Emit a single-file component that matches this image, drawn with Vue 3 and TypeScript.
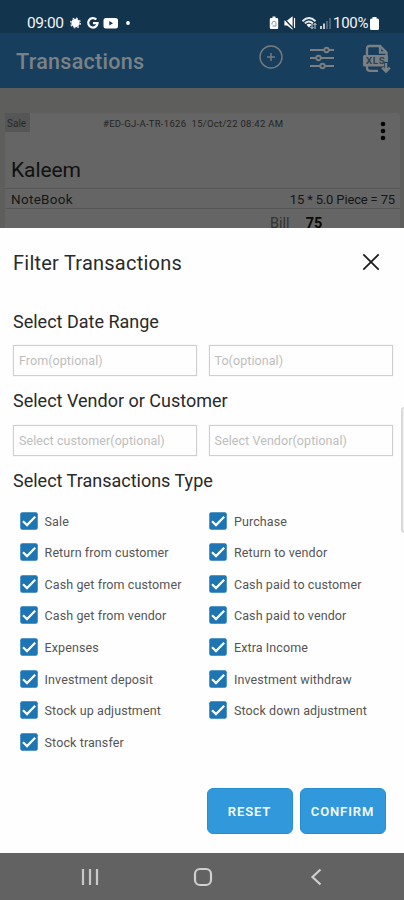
<script setup lang="ts">
import { ref } from 'vue'

interface TypeOption {
  label: string
  checked: boolean
}

const labels = [
  'Sale',
  'Purchase',
  'Return from customer',
  'Return to vendor',
  'Cash get from customer',
  'Cash paid to customer',
  'Cash get from vendor',
  'Cash paid to vendor',
  'Expenses',
  'Extra Income',
  'Investment deposit',
  'Investment withdraw',
  'Stock up adjustment',
  'Stock down adjustment',
  'Stock transfer',
]

const types = ref<TypeOption[]>(labels.map((label) => ({ label, checked: true })))

const reset = () => types.value.forEach((t) => (t.checked = true))
</script>

<template>
  <div class="phone">
    <div class="status">
      <span class="clock">09:00</span>
      <svg class="status-left" width="68" height="16" viewBox="0 0 68 16">
        <circle cx="7.5" cy="8" r="4.2" fill="#fff" />
        <circle cx="7.5" cy="8" r="4.8" fill="none" stroke="#d5dde3" stroke-width="1.4" stroke-dasharray="1.8 1.97" />
        <path d="M28.3 4.6A4.7 4.7 0 1 0 29.6 8.2H25" fill="none" stroke="#fff" stroke-width="2.2" />
        <rect x="35.5" y="3" width="14.5" height="10.5" rx="2.5" fill="#fff" />
        <path d="M41.3 6L45 8.2L41.3 10.4Z" fill="#12344d" />
        <circle cx="60" cy="8" r="1.9" fill="#fff" />
      </svg>
      <span class="grow"></span>
      <svg class="status-right" width="64" height="16" viewBox="0 0 64 16">
        <path d="M3 3h1.500V1.500h3V3H9q1.200 0 1.200 1.200v8.600Q10.200 14 9 14H3q-1.200 0-1.200-1.200V4.200Q1.800 3 3 3Z" fill="#fff" />
        <path d="M4 9.500V7.500L6 6L8 7.500V11H4.500" fill="none" stroke="#8595a0" stroke-width="1" />
        <path d="M17 6h2.500L24 2.500v11L19.500 10H17ZM26.500 3v10" fill="#fff" stroke="#fff" stroke-width="1.200" />
        <path d="M16 3.500L25 13" stroke="#12344d" stroke-width="1.300" />
        <path d="M34.500 6.200Q41 0 47.500 6.200M36.800 8.400Q41 4.600 45 8.400" fill="none" stroke="#e3e8eb" stroke-width="1.900" />
        <path d="M38.500 9.700Q41 7.800 43.500 9.700L41 12.500Z" fill="#fff" />
        <path d="M44 8v5.500M42.500 12l1.500 1.700L45.500 12M47 14V8.500M45.600 10L47 8.300L48.400 10" fill="none" stroke="#dce2e6" stroke-width=".9" />
        <path d="M53 11v3M56 8.500V14" stroke="#c0cad0" stroke-width="2" />
        <path d="M59 6v8M62 3v11" stroke="#526a7a" stroke-width="1.800" />
      </svg>
      <span class="percent">100%</span>
      <svg class="battery" width="9" height="13" viewBox="0 0 9 13">
        <path d="M2.500 1.500V0h4v1.500H7.500Q9 1.500 9 3v8.500Q9 13 7.500 13h-6Q0 13 0 11.500V3Q0 1.500 1.500 1.500Z" fill="#fff" />
      </svg>
    </div>

    <header class="appbar">
      <h1>Transactions</h1>
      <svg class="tool-add" width="24" height="24" viewBox="0 0 24 24" fill="none" stroke="#777b7f">
        <circle cx="12" cy="12" r="11" stroke-width="1.400" />
        <path d="M12 8v8M8 12h8" stroke-width="1.500" />
      </svg>
      <svg class="tool-filter" width="26" height="24" viewBox="0 0 26 24" fill="none" stroke="#7b7f82" stroke-width="1.900">
        <path d="M1 4H15M20 4H25M1 12H7M12 12H25M1 20H11M16 20H25" />
        <circle cx="17.500" cy="4" r="2.200" />
        <circle cx="9.500" cy="12" r="2.200" />
        <circle cx="13.500" cy="20" r="2.200" />
      </svg>
      <svg class="tool-xls" width="29" height="30" viewBox="0 0 29 30">
        <path d="M5 11V4.500Q5 2 7.500 2H18L24.500 8.500V20M18 2V8.500H24.500M5 21V24Q5 26.800 8 26.800H16" fill="none" stroke="#7b7f82" stroke-width="2.300" />
        <rect x="1" y="11" width="25" height="11.500" rx="1.500" fill="#7b7f82" />
        <text x="4" y="20.200" class="xls">XLS</text>
        <path d="M24 18V27M20 24L24 28L28 24" fill="none" stroke="#173f5d" stroke-width="4" />
        <path d="M24 19V27M20.200 23.700L24 27.500L27.800 23.700" fill="none" stroke="#7b7f82" stroke-width="2.500" />
      </svg>
    </header>

    <main class="list">
      <article class="card">
        <div class="card-top">
          <span class="tag">Sale</span>
          <span class="ident">#ED-GJ-A-TR-1626&nbsp; 15/Oct/22 08:42 AM</span>
          <svg class="more" width="6" height="20" viewBox="0 0 6 20" fill="#050505">
            <circle cx="3" cy="3" r="2.300" /><circle cx="3" cy="10" r="2.300" /><circle cx="3" cy="17" r="2.300" />
          </svg>
        </div>
        <div class="party">Kaleem</div>
        <div class="line"><span class="item">NoteBook</span><span class="sum">15 * 5.0 Piece = 75</span></div>
        <div class="bill"><span>Bill</span><b>75</b></div>
      </article>
    </main>

    <section class="sheet">
      <div class="sheet-head">
        <h2>Filter Transactions</h2>
        <svg width="18" height="18" viewBox="0 0 18 18"><path d="M1.300 1.300L16.700 16.700M16.700 1.300L1.300 16.700" stroke="#1b1b1b" stroke-width="1.700" /></svg>
      </div>
      <h3 class="h-date">Select Date Range</h3>
      <div class="fields">
        <div class="field">From(optional)</div>
        <div class="field">To(optional)</div>
      </div>
      <h3 class="h-party">Select Vendor or Customer</h3>
      <div class="fields">
        <div class="field">Select customer(optional)</div>
        <div class="field">Select Vendor(optional)</div>
      </div>
      <h3 class="h-type">Select Transactions Type</h3>
      <div class="types">
        <div v-for="t in types" :key="t.label" class="type" @click="t.checked = !t.checked">
          <svg width="18" height="18" viewBox="0 0 18 18">
            <rect x=".250" y=".250" width="17.500" height="17.500" rx="2" fill="#1d75b3" />
            <path v-if="t.checked" d="M3 9.300L7 13.100L15.200 4.700" fill="none" stroke="#fff" stroke-width="2.200" />
          </svg>
          <span>{{ t.label }}</span>
        </div>
      </div>
      <div class="actions">
        <button @click="reset">RESET</button>
        <button>CONFIRM</button>
      </div>
      <div class="edge-handle"></div>
    </section>

    <nav class="navbar">
      <svg width="18" height="18" viewBox="0 0 18 18"><path d="M2 1V17M9 1V17M16 1V17" stroke="#c8c8c8" stroke-width="2.200" /></svg>
      <svg width="20" height="20" viewBox="0 0 20 20"><rect x="2" y="2" width="16" height="16" rx="5" fill="none" stroke="#d0d0d0" stroke-width="2.200" /></svg>
      <svg width="12" height="18" viewBox="0 0 12 18"><path d="M10.500 1.500L2.500 9L10.500 16.500" fill="none" stroke="#d0d0d0" stroke-width="2.200" /></svg>
    </nav>
  </div>
</template>

<style>
body {
  margin: 0;
}
</style>

<style scoped>
.phone {
  width: 404px;
  height: 900px;
  display: flex;
  flex-direction: column;
  overflow: hidden;
  font-family: Roboto, "Liberation Sans", sans-serif;
  background: #fff;
}
.phone * {
  box-sizing: border-box;
}
svg {
  display: block;
  flex: none;
}
.grow {
  flex: 1;
}
.status {
  height: 33px;
  flex: none;
  display: flex;
  align-items: center;
  padding: 13px 25px 0 27px;
  background: #12344d;
  color: #f4f6f7;
}
.clock {
  width: 41px;
  font-size: 15.5px;
  letter-spacing: -0.4px;
}
.status-right {
  margin-right: -1px;
}
.percent {
  margin-left: 2px;
  width: 37px;
  font-size: 15px;
  letter-spacing: -0.3px;
  white-space: nowrap;
}
.appbar {
  height: 55px;
  flex: none;
  display: flex;
  align-items: center;
  padding: 0 13px 0 16px;
  background: #173f5d;
}
h1 {
  margin: 3px auto 0 0;
  font-size: 21.5px;
  line-height: 28px;
  font-weight: 500;
  letter-spacing: 0.3px;
  color: #7b8287;
}
.tool-add {
  margin: -7px 26px 0 0;
}
.tool-filter {
  margin: -6px 27px 0 0;
}
.tool-xls {
  margin-top: -3px;
}
.xls {
  font: 700 9.5px Roboto, sans-serif;
  letter-spacing: 0.8px;
  fill: #2b4352;
}
.list {
  height: 139.5px;
  flex: none;
  padding: 25px 4px 0 5px;
  background: #5e5e5c;
  overflow: hidden;
}
.card {
  height: 130px;
  background: #656565;
  border-radius: 3px 3px 0 0;
  color: #111;
}
.card-top {
  display: flex;
  height: 38px;
}
.tag {
  width: 25px;
  height: 19px;
  padding-left: 2px;
  font-size: 10px;
  line-height: 21px;
  background: #565656;
  color: #292929;
}
.ident {
  margin-left: 73px;
  font-size: 9.5px;
  line-height: 21px;
  letter-spacing: 0.28px;
  color: #242424;
  white-space: nowrap;
}
.more {
  margin: 8px 14px 0 auto;
}
.party {
  height: 37px;
  padding-left: 6px;
  font-size: 21px;
  line-height: 38px;
  letter-spacing: -0.1px;
}
.line {
  display: flex;
  justify-content: space-between;
  height: 21px;
  padding: 0 5px 0 6px;
  border-top: 1px solid #575757;
  border-bottom: 1px solid #575757;
  font-size: 13.5px;
  line-height: 21px;
  color: #161616;
}
.item {
  letter-spacing: 0.3px;
}
.sum {
  font-size: 13px;
  letter-spacing: -0.15px;
}
.bill {
  display: flex;
  gap: 16px;
  padding-left: 265px;
  font-size: 14.5px;
  line-height: 29px;
  color: #333;
}
.bill b {
  font-weight: 700;
  color: #0a0a0a;
}
.sheet {
  position: relative;
  height: 625.5px;
  flex: none;
  background: #fefefe;
}
.sheet-head {
  display: flex;
  justify-content: space-between;
  align-items: center;
  height: 69px;
  padding: 0 24px 0 13px;
}
h2 {
  margin: 2px 0 0;
  font-size: 20px;
  font-weight: 400;
  letter-spacing: 0.23px;
  color: #2a2a2a;
}
h3 {
  margin: 0;
  padding: 13px 13px 0;
  height: 49px;
  font-size: 18px;
  line-height: 24px;
  font-weight: 400;
  letter-spacing: 0;
  color: #2a2a2a;
}
.h-date {
  height: 48px;
  padding-top: 13px;
}
.fields {
  display: grid;
  grid-template-columns: 184px 184px;
  column-gap: 11.5px;
  padding-left: 13px;
}
.field {
  height: 31px;
  padding-left: 5px;
  border: 1.5px solid #cfcfcf;
  box-shadow: 0 0 1px #ddd;
  font-size: 12.5px;
  line-height: 30px;
  letter-spacing: 0.07px;
  color: #bdbdbd;
  white-space: nowrap;
}
.types {
  display: grid;
  grid-template-columns: 189.4px 180px;
  grid-auto-rows: 31.55px;
  padding: 0.5px 0 0 19.6px;
}
.type {
  display: flex;
  align-items: center;
  gap: 7px;
  font-size: 12.5px;
  letter-spacing: 0.1px;
  color: #555;
  white-space: nowrap;
}
.type span {
  padding-top: 1px;
}
.actions {
  display: flex;
  gap: 7px;
  justify-content: flex-end;
  padding: 31px 18.5px 0 0;
}
button {
  width: 86px;
  height: 46px;
  padding: 1px 0 0;
  border: 1px solid #268fd2;
  border-radius: 6px;
  background: #3198dc;
  color: #f5fbff;
  font: 600 13px Roboto, sans-serif;
  letter-spacing: 0.9px;
}
.edge-handle {
  position: absolute;
  top: 179px;
  right: -3px;
  width: 6px;
  height: 126px;
  border: 2px solid #dadada;
  border-radius: 4px;
  background: #f3f3f3;
}
.navbar {
  height: 47px;
  flex: none;
  display: flex;
  align-items: center;
  padding: 1px 0 0 80.5px;
  background: #626262;
}
.navbar svg:nth-child(2) {
  margin-left: 94px;
}
.navbar svg:nth-child(3) {
  margin-left: 97.5px;
}
</style>
